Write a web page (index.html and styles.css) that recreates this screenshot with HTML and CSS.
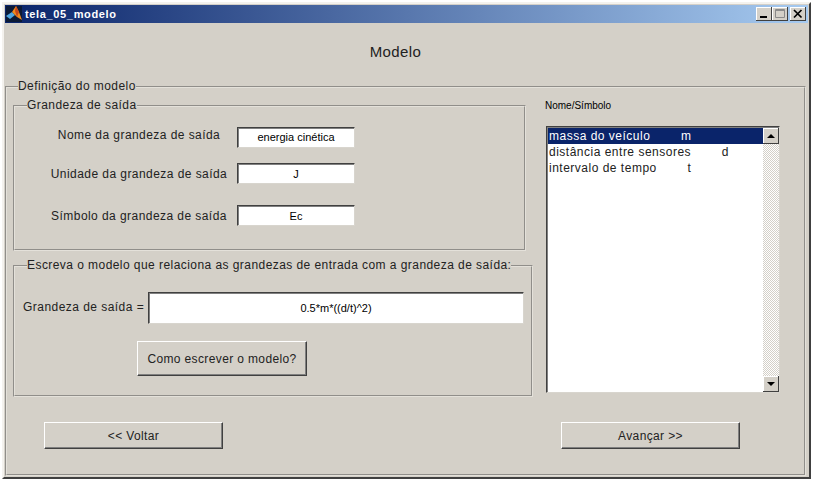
FILE: index.html
```html
<!DOCTYPE html>
<html lang="pt-BR">
<head>
  <meta charset="UTF-8">
  <meta name="viewport" content="width=device-width, initial-scale=1.0">
  <title>tela_05_modelo</title>
  <link rel="stylesheet" href="styles.css">
</head>
<body>
  <div class="window">
    <div class="title-bar">
      <svg class="app-icon" width="16" height="16" viewBox="0 0 16 16">
        <rect width="16" height="16" fill="#0c1a36"/>
        <path d="M0 10 L6 6 L9 9 L4 13 Z" fill="#4fa6e0"/>
        <path d="M6 6 L10 0 L13 6 L16 14 L11 11 L9 9 Z" fill="#f08a1e"/>
        <path d="M10 0 L13 6 L11 11 L9 5 Z" fill="#c8481a"/>
      </svg>
      <span class="title-text">tela_05_modelo</span>
      <div class="window-buttons">
        <span class="win-button">
          <svg width="16" height="14" viewBox="0 0 16 14"><rect x="4" y="9" width="7" height="2" fill="#000"/></svg>
        </span>
        <span class="win-button">
          <svg width="16" height="14" viewBox="0 0 16 14"><path d="M3.5 2.5h9v8h-9z M3.5 3.5h9" fill="none" stroke="#8a8a8a"/></svg>
        </span>
        <span class="win-button close-button">
          <svg width="16" height="14" viewBox="0 0 16 14"><path d="M4 3 L11.5 10.5 M11.5 3 L4 10.5" stroke="#000" stroke-width="1.7"/></svg>
        </span>
      </div>
    </div>

    <h1 class="page-title">Modelo</h1>

    <fieldset class="panel main-panel">
      <legend>Definição do modelo</legend>
      <div class="main-columns">
        <div class="left-column">
          <fieldset class="panel output-panel">
            <legend>Grandeza de saída</legend>
            <div class="field-row row-name">
              <label class="field-label">Nome da grandeza de saída</label>
              <div class="text-box small-box">energia cinética</div>
            </div>
            <div class="field-row row-unit">
              <label class="field-label">Unidade da grandeza de saída</label>
              <div class="text-box small-box">J</div>
            </div>
            <div class="field-row row-symbol">
              <label class="field-label">Símbolo da grandeza de saída</label>
              <div class="text-box small-box">Ec</div>
            </div>
          </fieldset>

          <fieldset class="panel model-panel">
            <legend>Escreva o modelo que relaciona as grandezas de entrada com a grandeza de saída:</legend>
            <div class="model-row">
              <label class="model-label">Grandeza de saída =</label>
              <div class="text-box model-box">0.5*m*((d/t)^2)</div>
            </div>
            <button class="push-button help-button">Como escrever o modelo?</button>
          </fieldset>
        </div>

        <div class="right-column">
          <div class="list-title">Nome/Símbolo</div>
          <div class="list-box">
            <div class="list-items">
              <div class="list-item selected">massa do veículo        m</div>
              <div class="list-item">distância entre sensores        d</div>
              <div class="list-item">intervalo de tempo        t</div>
            </div>
            <div class="scroll-bar">
              <span class="scroll-button"><span class="arrow-up"></span></span>
              <span class="scroll-track"></span>
              <span class="scroll-button"><span class="arrow-down"></span></span>
            </div>
          </div>
        </div>
      </div>

      <div class="nav-row">
        <button class="push-button nav-button">&lt;&lt; Voltar</button>
        <button class="push-button nav-button">Avançar &gt;&gt;</button>
      </div>
    </fieldset>
  </div>
</body>
</html>
```
FILE: styles.css
```css
html, body {
  margin: 0;
  background-color: #fff;
}

body {
  font-family: "Liberation Sans", Arial, sans-serif;
  font-size: 12px;
  color: #000;
}

.window {
  box-sizing: border-box;
  width: 809px;
  height: 477px;
  margin: 2px 0 0 2px;
  padding: 1px;
  background-color: #d4d0c8;
  border: 2px solid;
  border-color: #f4f2ee #404040 #404040 #f4f2ee;
}

.title-bar {
  display: flex;
  align-items: center;
  height: 18px;
  background: linear-gradient(to right, #0a246a, #a6caf0);
}

.app-icon {
  margin: 0 3px 0 1px;
}

.title-text {
  color: #fff;
  font-weight: bold;
  font-size: 11px;
  letter-spacing: 0.65px;
}

.window-buttons {
  display: flex;
  margin-left: auto;
  margin-right: 2px;
}

.win-button {
  display: block;
  width: 16px;
  height: 14px;
  background-color: #d4d0c8;
  box-shadow: inset -1px -1px 0 #404040, inset 1px 1px 0 #fff;
}

.win-button svg {
  display: block;
}

.close-button {
  margin-left: 2px;
}

.page-title {
  margin: 0;
  padding: 19px 22px 0 0;
  height: 38px;
  text-align: center;
  font-size: 15px;
  font-weight: normal;
  line-height: 20px;
  letter-spacing: 0.4px;
  color: #222;
}

.panel {
  margin: 0;
  min-width: 0;
  box-sizing: border-box;
  border: 2px groove #e4e1da;
}

.panel legend {
  padding: 0 0 2px;
  font-size: 12px;
  line-height: 12px;
  letter-spacing: 0.44px;
  white-space: nowrap;
  color: #222;
}

.main-panel {
  width: 801px;
  height: 396px;
  padding: 0 0 0 6px;
}

.main-panel > legend {
  margin-left: 5px;
}

.main-columns {
  display: flex;
}

.left-column {
  width: 520px;
  padding-top: 5px;
}

.output-panel {
  width: 513px;
  height: 152px;
  padding: 0;
}

.output-panel > legend {
  margin-left: 12px;
}

.field-row {
  display: flex;
  align-items: center;
  height: 21px;
  color: #222;
}

.row-name {
  margin-top: 14px;
  height: 20px;
}

.row-name .field-label {
  padding-bottom: 4px;
}

.row-unit {
  margin-top: 16px;
}

.row-symbol {
  margin-top: 21px;
}

.field-label {
  box-sizing: border-box;
  width: 222px;
  padding-left: 26px;
  text-align: center;
  letter-spacing: 0.44px;
  white-space: nowrap;
}

.text-box {
  box-sizing: border-box;
  display: flex;
  align-items: center;
  justify-content: center;
  background-color: #fff;
  border: 1px solid;
  border-color: #404040 #d8d5ce #d8d5ce #404040;
  box-shadow: inset 1px 1px 0 #808080;
  font-size: 10px;
  color: #000;
}

.small-box {
  width: 118px;
  height: 21px;
  font-size: 11px;
}

.model-panel {
  width: 520px;
  height: 138px;
  margin-top: 8px;
  padding: 0;
}

.model-panel > legend {
  margin-left: 12px;
}

.model-row {
  display: flex;
  align-items: center;
  margin-top: 19px;
}

.model-label {
  box-sizing: border-box;
  width: 133px;
  padding: 0 0 3px 8px;
  letter-spacing: 0.46px;
  white-space: nowrap;
  color: #222;
}

.model-box {
  width: 376px;
  height: 32px;
  font-size: 11px;
}

.push-button {
  box-sizing: border-box;
  padding: 0;
  font-family: inherit;
  font-size: 12px;
  letter-spacing: 0.37px;
  color: #222;
  background-color: #d4d0c8;
  border: 1px solid;
  border-color: #fff #404040 #404040 #fff;
  box-shadow: inset -1px -1px 0 #808080;
}

.help-button {
  display: block;
  width: 170px;
  height: 35px;
  margin: 17px 0 0 122px;
}

.right-column {
  width: 240px;
  margin-left: 12px;
}

.list-title {
  height: 14px;
  margin-top: 5px;
  font-size: 10px;
  line-height: 14px;
}

.list-box {
  box-sizing: border-box;
  display: flex;
  width: 234px;
  height: 267px;
  margin: 13px 0 0 1px;
  background-color: #fff;
  border: 1px solid;
  border-color: #404040 #d8d5ce #d8d5ce #404040;
  box-shadow: inset 1px 1px 0 #808080;
  padding: 1px 0 0 1px;
}

.list-items {
  flex: 1;
}

.list-item {
  height: 16px;
  padding-left: 1px;
  line-height: 17px;
  letter-spacing: 0.5px;
  white-space: pre;
  color: #222;
}

.selected {
  color: #fff;
  background-color: #0a246a;
}

.scroll-bar {
  display: flex;
  flex-direction: column;
  width: 16px;
}

.scroll-button {
  display: flex;
  align-items: center;
  justify-content: center;
  height: 16px;
  background-color: #d4d0c8;
  box-shadow: inset -1px -1px 0 #404040, inset 1px 1px 0 #fff;
}

.scroll-track {
  flex: 1;
  background: repeating-conic-gradient(#d4d0c8 0 25%, #fff 0 50%) 0 0 / 2px 2px;
}

.arrow-up, .arrow-down {
  width: 0;
  height: 0;
  border-left: 4px solid transparent;
  border-right: 4px solid transparent;
}

.arrow-up {
  border-bottom: 4px solid #000;
}

.arrow-down {
  border-top: 4px solid #000;
}

.nav-row {
  display: flex;
  justify-content: space-between;
  width: 696px;
  margin: 25px 0 0 31px;
}

.nav-button {
  width: 179px;
  height: 27px;
}
```
